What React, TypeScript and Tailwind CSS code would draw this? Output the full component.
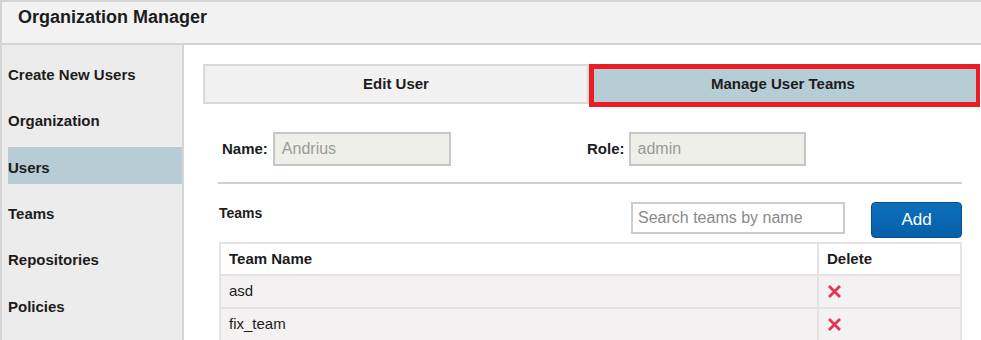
import React from 'react';

const NAV_ITEMS = ['Create New Users', 'Organization', 'Users', 'Teams', 'Repositories', 'Policies'];

const TEAMS = ['asd', 'fix_team'];

const DeleteIcon = () => (
  <svg width="15" height="15" viewBox="0 0 15 15" className="block">
    <path d="M2 2 L13 13 M13 2 L2 13" stroke="#e2364f" strokeWidth="2.8" strokeLinecap="butt" />
  </svg>
);

export default function App() {
  return (
    <div
      className="w-[981px] h-[340px] overflow-hidden flex flex-col bg-white text-[#1c1c1c]"
      style={{ fontFamily: '"Liberation Sans", Arial, sans-serif' }}
    >
      {/* Header */}
      <div className="h-[45px] shrink-0 bg-[#f2f2f2] border-t-2 border-b-2 border-l-2 border-[#d3d3d3] px-[16px] pt-[4px]">
        <h1 className="text-[18px] font-bold leading-[22px]">Organization Manager</h1>
      </div>

      <div className="flex flex-1 min-h-0">
        {/* Sidebar */}
        <div className="w-[184px] shrink-0 bg-[#ececec] border-l-2 border-r-2 border-[#d6d6d6] pt-[9px] flex flex-col gap-[9.4px]">
          {NAV_ITEMS.map((item) => (
            <div
              key={item}
              className={`ml-[6px] h-[37px] shrink-0 flex items-center pt-[5px] text-[15px] font-bold ${
                item === 'Users' ? 'bg-[#b8ccd6]' : ''
              }`}
            >
              {item}
            </div>
          ))}
        </div>

        {/* Main */}
        <div className="flex-1 min-w-0 pl-[19px] pt-[19px] pr-[4px]">
          {/* Tabs */}
          <div className="flex h-[40px]">
            <div className="w-[386px] shrink-0 bg-[#f1f1f1] border-2 border-[#d9d9d9] flex items-center justify-center text-[15px] font-bold">
              Edit User
            </div>
            <div className="relative flex-1 bg-[#b7cdd6] border border-[#c9c9c9] flex items-center justify-center text-[15px] font-bold">
              Manage User Teams
              <div className="absolute -top-[1px] -left-[1px] -right-[4px] -bottom-[4px] border-[5px] border-r-4 border-[#ec1c24]" />
            </div>
          </div>

          {/* Name / Role */}
          <div className="flex items-center mt-[28px] pl-[19px]">
            <div className="w-[365px] flex items-center gap-[5px]">
              <span className="text-[15px] font-bold">Name:</span>
              <div className="w-[178px] h-[34px] bg-[#efefea] border-2 border-[#c6c6c6] flex items-center px-[7px] text-[16px] text-[#9a9a9a]">
                Andrius
              </div>
            </div>
            <div className="flex items-center gap-[4px]">
              <span className="text-[15px] font-bold">Role:</span>
              <div className="w-[177px] h-[34px] bg-[#efefea] border-2 border-[#c6c6c6] flex items-center px-[7px] text-[16px] text-[#9a9a9a]">
                admin
              </div>
            </div>
          </div>

          {/* Teams section */}
          <div className="ml-[15px] w-[744px]">
            <div className="h-[2px] bg-[#d0d0d0] mt-[16px]" />

            <div className="flex items-start mt-[18px] pl-[1px]">
              <span className="text-[14px] font-bold mt-[1px] flex-1">Teams</span>
              <div className="w-[214px] h-[32px] border-2 border-[#cccccc] flex items-center px-[5px] text-[16px] text-[#8a8a8a] bg-white">
                Search teams by name
              </div>
              <button className="ml-[26px] w-[91px] h-[36px] rounded-[4px] border border-[#0a4f8c] bg-gradient-to-b from-[#0c70bd] to-[#0760a8] text-white text-[17px] flex items-center justify-center">
                Add
              </button>
            </div>

            <div className="mt-[4px] ml-[1px] border-2 border-[#e4e4e4]">
              <div className="flex h-[32px] bg-white border-b-2 border-[#e4e4e4]">
                <div className="w-[598px] border-r-2 border-[#e4e4e4] flex items-center pl-[8px] text-[15px] font-bold">
                  Team Name
                </div>
                <div className="flex-1 flex items-center pl-[8px] text-[15px] font-bold">Delete</div>
              </div>
              {TEAMS.map((team) => (
                <div key={team} className="flex h-[33px] bg-[#f3f1f1] border-b-2 border-[#e4e4e4]">
                  <div className="w-[598px] border-r-2 border-[#e4e4e4] flex items-center pl-[8px] text-[15px]">
                    {team}
                  </div>
                  <div className="flex-1 flex items-center pl-[8px]">
                    <DeleteIcon />
                  </div>
                </div>
              ))}
            </div>
          </div>
        </div>
      </div>
    </div>
  );
}
